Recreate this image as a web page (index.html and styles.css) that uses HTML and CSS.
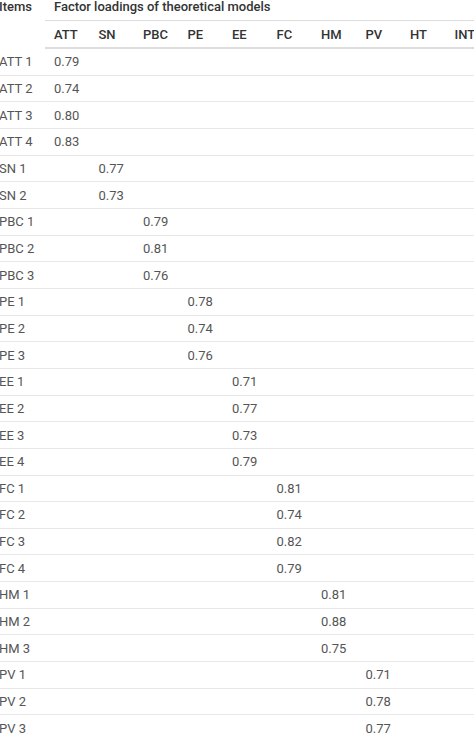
FILE: index.html
```html
<!DOCTYPE html>
<html>
<head>
<meta charset="utf-8">
<link rel="stylesheet" href="styles.css">
</head>
<body>
<table class="loadings">
  <colgroup>
    <col class="c-item">
    <col class="c-val"><col class="c-val"><col class="c-val"><col class="c-val"><col class="c-val">
    <col class="c-val"><col class="c-val"><col class="c-val"><col class="c-val"><col class="c-val">
  </colgroup>
  <thead>
    <tr class="h1">
      <th rowspan="2" class="items">Items</th>
      <th colspan="10" class="group">Factor loadings of theoretical models</th>
    </tr>
    <tr class="h2">
      <th>ATT</th><th>SN</th><th>PBC</th><th>PE</th><th>EE</th><th>FC</th><th>HM</th><th>PV</th><th>HT</th><th>INT</th>
    </tr>
  </thead>
  <tbody>
    <tr><td>ATT 1</td><td>0.79</td><td></td><td></td><td></td><td></td><td></td><td></td><td></td><td></td><td></td></tr>
    <tr><td>ATT 2</td><td>0.74</td><td></td><td></td><td></td><td></td><td></td><td></td><td></td><td></td><td></td></tr>
    <tr><td>ATT 3</td><td>0.80</td><td></td><td></td><td></td><td></td><td></td><td></td><td></td><td></td><td></td></tr>
    <tr><td>ATT 4</td><td>0.83</td><td></td><td></td><td></td><td></td><td></td><td></td><td></td><td></td><td></td></tr>
    <tr><td>SN 1</td><td></td><td>0.77</td><td></td><td></td><td></td><td></td><td></td><td></td><td></td><td></td></tr>
    <tr><td>SN 2</td><td></td><td>0.73</td><td></td><td></td><td></td><td></td><td></td><td></td><td></td><td></td></tr>
    <tr><td>PBC 1</td><td></td><td></td><td>0.79</td><td></td><td></td><td></td><td></td><td></td><td></td><td></td></tr>
    <tr><td>PBC 2</td><td></td><td></td><td>0.81</td><td></td><td></td><td></td><td></td><td></td><td></td><td></td></tr>
    <tr><td>PBC 3</td><td></td><td></td><td>0.76</td><td></td><td></td><td></td><td></td><td></td><td></td><td></td></tr>
    <tr><td>PE 1</td><td></td><td></td><td></td><td>0.78</td><td></td><td></td><td></td><td></td><td></td><td></td></tr>
    <tr><td>PE 2</td><td></td><td></td><td></td><td>0.74</td><td></td><td></td><td></td><td></td><td></td><td></td></tr>
    <tr><td>PE 3</td><td></td><td></td><td></td><td>0.76</td><td></td><td></td><td></td><td></td><td></td><td></td></tr>
    <tr><td>EE 1</td><td></td><td></td><td></td><td></td><td>0.71</td><td></td><td></td><td></td><td></td><td></td></tr>
    <tr><td>EE 2</td><td></td><td></td><td></td><td></td><td>0.77</td><td></td><td></td><td></td><td></td><td></td></tr>
    <tr><td>EE 3</td><td></td><td></td><td></td><td></td><td>0.73</td><td></td><td></td><td></td><td></td><td></td></tr>
    <tr><td>EE 4</td><td></td><td></td><td></td><td></td><td>0.79</td><td></td><td></td><td></td><td></td><td></td></tr>
    <tr><td>FC 1</td><td></td><td></td><td></td><td></td><td></td><td>0.81</td><td></td><td></td><td></td><td></td></tr>
    <tr><td>FC 2</td><td></td><td></td><td></td><td></td><td></td><td>0.74</td><td></td><td></td><td></td><td></td></tr>
    <tr><td>FC 3</td><td></td><td></td><td></td><td></td><td></td><td>0.82</td><td></td><td></td><td></td><td></td></tr>
    <tr><td>FC 4</td><td></td><td></td><td></td><td></td><td></td><td>0.79</td><td></td><td></td><td></td><td></td></tr>
    <tr><td>HM 1</td><td></td><td></td><td></td><td></td><td></td><td></td><td>0.81</td><td></td><td></td><td></td></tr>
    <tr><td>HM 2</td><td></td><td></td><td></td><td></td><td></td><td></td><td>0.88</td><td></td><td></td><td></td></tr>
    <tr><td>HM 3</td><td></td><td></td><td></td><td></td><td></td><td></td><td>0.75</td><td></td><td></td><td></td></tr>
    <tr><td>PV 1</td><td></td><td></td><td></td><td></td><td></td><td></td><td></td><td>0.71</td><td></td><td></td></tr>
    <tr><td>PV 2</td><td></td><td></td><td></td><td></td><td></td><td></td><td></td><td>0.78</td><td></td><td></td></tr>
    <tr><td>PV 3</td><td></td><td></td><td></td><td></td><td></td><td></td><td></td><td>0.77</td><td></td><td></td></tr>
  </tbody>
</table>
</body>
</html>
```
FILE: styles.css
```css
html, body {
  margin: 0;
  padding: 0;
  background: #ffffff;
  overflow: hidden;
}
body {
  width: 474px;
  height: 736px;
}
.loadings {
  border-collapse: collapse;
  table-layout: fixed;
  width: 500px;
  margin-left: -10px;
  margin-top: -7px;
  font-family: Roboto, "Liberation Sans", sans-serif;
  font-size: 13px;
  color: #555555;
}
.c-item { width: 55px; }
.c-val { width: 44.5px; }
.loadings th,
.loadings td {
  padding: 0 0 0 9px;
  text-align: left;
  white-space: nowrap;
  overflow: visible;
}
.loadings th {
  font-weight: 500;
  color: #333333;
}
.h1 th { height: 27px; vertical-align: middle; }
.h1 th.items { vertical-align: top; padding-top: 6px; }
.h1 th.group { border-bottom: 1px solid #dddddd; }
.h2 th { height: 26px; border-bottom: 2px solid #dddddd; }
.loadings td {
  height: 25.67px;
  border-bottom: 1px solid #e8e8e8;
}
```
